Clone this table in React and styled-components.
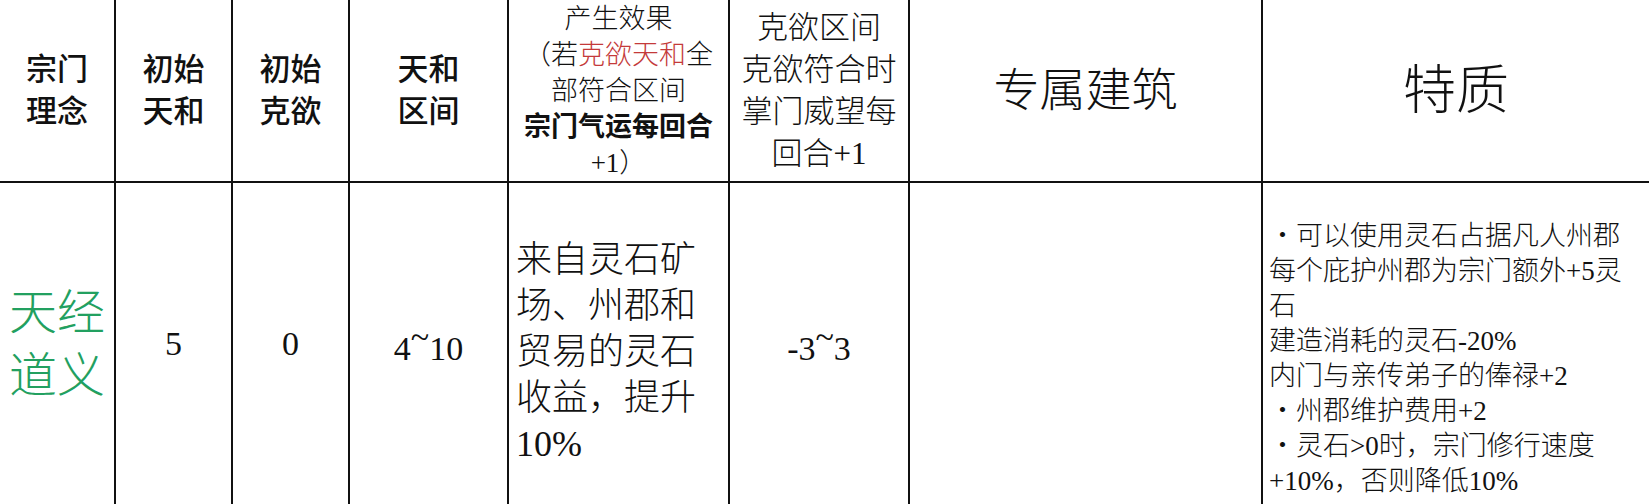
import React from "react";
import styled, { createGlobalStyle } from "styled-components";

const GlobalStyle = createGlobalStyle`
  html, body {
    margin: 0;
    padding: 0;
    background: #fff;
  }
  body {
    font-family: "Liberation Serif", "Noto Sans CJK SC", serif;
    color: #111;
  }
`;

const Page = styled.div`
  width: 1649px;
  height: 504px;
  overflow: hidden;
`;

const Sheet = styled.table`
  width: 1649px;
  table-layout: fixed;
  border-collapse: collapse;
`;

const Col = styled.col`
  width: ${(p) => p.$w}px;
`;

const HeadRow = styled.tr`
  height: 182px;
`;

const BodyRow = styled.tr`
  height: 322px;
`;

const Cell = styled.td`
  border-right: 2px solid #111;
  border-bottom: 2px solid #111;
  padding: ${(p) => p.$top || 0}px ${(p) => p.$pad ?? 4}px 0;
  text-align: ${(p) => p.$align || "center"};
  vertical-align: middle;
  font-size: ${(p) => p.$size || 30}px;
  line-height: ${(p) => p.$lh || 40}px;
  font-weight: ${(p) => p.$weight || 400};
  color: ${(p) => p.$color || "#111"};
  white-space: nowrap;

  &:last-child {
    border-right: none;
  }
`;

const BodyCell = styled(Cell)`
  border-bottom: none;
`;

const Red = styled.span`
  color: #c43a3a;
`;

const Strong = styled.span`
  font-weight: 700;
`;

const Tilde = styled.span`
  vertical-align: 0.36em;
`;

const Line = styled.div``;

const widths = [115, 117, 117, 159, 221, 180, 353, 387];

const traits = [
  "・可以使用灵石占据凡人州郡",
  "每个庇护州郡为宗门额外+5灵",
  "石",
  "建造消耗的灵石-20%",
  "内门与亲传弟子的俸禄+2",
  "・州郡维护费用+2",
  "・灵石>0时，宗门修行速度",
  "+10%，否则降低10%",
];

const effect = ["来自灵石矿", "场、州郡和", "贸易的灵石", "收益，提升", "10%"];

const App = () => {
  return (
    <Page>
      <GlobalStyle />
      <Sheet>
        <colgroup>
          {widths.map((w, i) => (
            <Col key={i} $w={w} />
          ))}
        </colgroup>
        <tbody>
          <HeadRow>
            <Cell $size={31} $lh={42} $weight={500}>
              宗门<br />理念
            </Cell>
            <Cell $size={31} $lh={42} $weight={500}>
              初始<br />天和
            </Cell>
            <Cell $size={31} $lh={42} $weight={500}>
              初始<br />克欲
            </Cell>
            <Cell $size={31} $lh={42} $weight={500}>
              天和<br />区间
            </Cell>
            <Cell $size={27} $lh={36} $weight={300}>
              产生效果<br />
              （若<Red>克欲天和</Red>全<br />
              部符合区间<br />
              <Strong>宗门气运每回合</Strong><br />
              +1）
            </Cell>
            <Cell $size={31} $lh={42} $weight={300}>
              克欲区间<br />克欲符合时<br />掌门威望每<br />回合+1
            </Cell>
            <Cell $size={46} $lh={56} $weight={300}>
              专属建筑
            </Cell>
            <Cell $size={53} $lh={60} $weight={300}>
              特质
            </Cell>
          </HeadRow>
          <BodyRow>
            <BodyCell $size={48} $lh={63} $weight={300} $color="#22a060" $pad={0}>
              天经<br />道义
            </BodyCell>
            <BodyCell $size={34}>5</BodyCell>
            <BodyCell $size={34}>0</BodyCell>
            <BodyCell $size={34}>
              4<Tilde>~</Tilde>10
            </BodyCell>
            <BodyCell $size={36} $lh={46} $weight={300} $align="left" $pad={7} $top={16}>
              {effect.map((t) => (
                <Line key={t}>{t}</Line>
              ))}
            </BodyCell>
            <BodyCell $size={34}>
              -3<Tilde>~</Tilde>3
            </BodyCell>
            <BodyCell />
            <BodyCell $size={27} $lh={35} $weight={300} $align="left" $pad={6} $top={30}>
              {traits.map((t) => (
                <Line key={t}>{t}</Line>
              ))}
            </BodyCell>
          </BodyRow>
        </tbody>
      </Sheet>
    </Page>
  );
};

export default App;
